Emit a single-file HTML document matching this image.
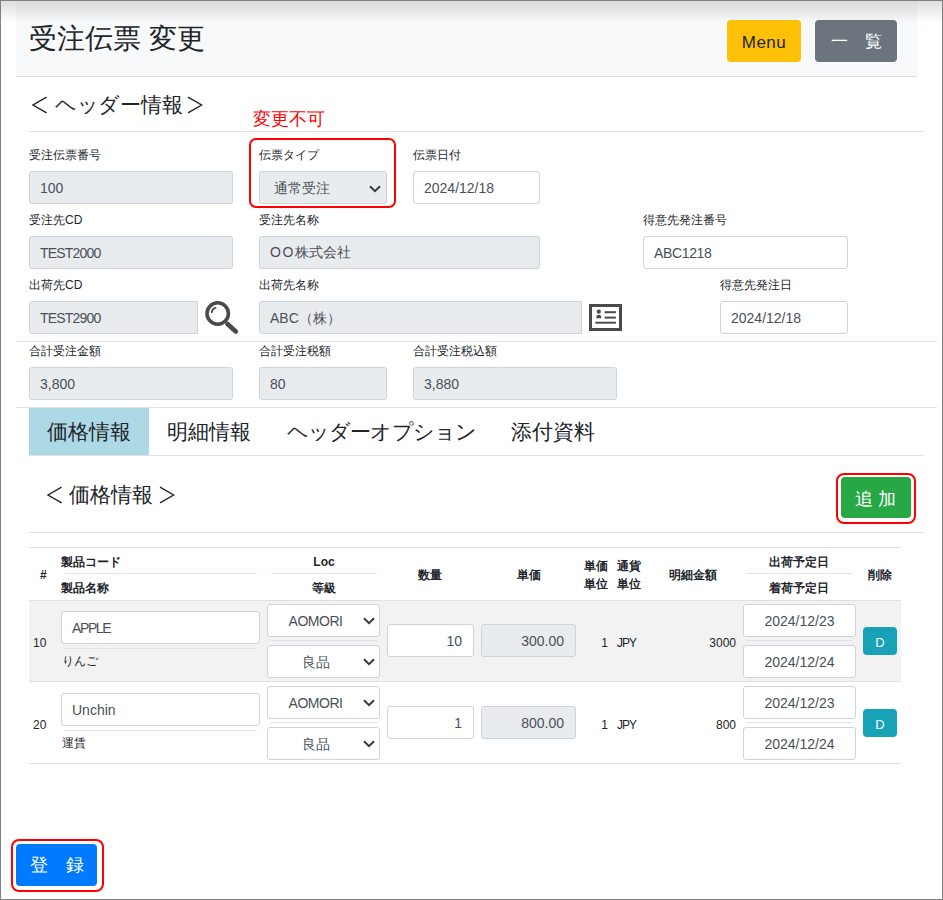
<!DOCTYPE html>
<html lang="ja">
<head>
<meta charset="utf-8">
<title>受注伝票 変更</title>
<style>
*{box-sizing:border-box;margin:0;padding:0}
html,body{width:943px;height:900px;overflow:hidden;background:#fff}
body{position:relative;font-family:"Liberation Sans",sans-serif;color:#212529;font-size:14px}
.a{position:absolute}
.frame{left:0;top:0;width:943px;height:900px;border:1px solid #808080;z-index:50}
.shade{left:1px;top:1px;width:941px;height:22px;background:linear-gradient(to bottom,rgba(0,0,0,.13),rgba(0,0,0,0));z-index:40}
.hdr{left:16px;top:1px;width:901px;height:76px;background:#f8f9fa;border-bottom:1px solid #dee2e6}
.title{left:29px;top:21px;font-size:28px;line-height:36px;white-space:nowrap}
.btn{text-align:center;border-radius:4px;white-space:nowrap}
.line{height:1px;background:#dee2e6}
.lbl{font-size:12px;line-height:16px;white-space:nowrap}
.inp{height:33px;border:1px solid #ced4da;border-radius:3px;background:#fff;color:#495057;font-size:14px;line-height:33px;padding-left:10px;white-space:nowrap;overflow:hidden}
.dis{background:#e9ecef}
.chev{position:absolute}
.red{border:2px solid #f00;border-radius:7px}
.tab{top:408px;height:47px;font-size:21px;line-height:47px;white-space:nowrap;padding:0 18px;color:#212529}
.th{font-size:12px;font-weight:bold;line-height:14px;white-space:nowrap}
.td{font-size:12px;line-height:14px;white-space:nowrap}
.c{text-align:center}
.r{text-align:right}
.ti{line-height:33px}
</style>
</head>
<body>
<div class="a frame"></div>
<div class="a shade"></div>
<div class="a hdr"></div>
<div class="a title">受注伝票 変更</div>
<div class="a btn" style="left:727px;top:20px;width:74px;height:42px;background:#ffc107;font-size:17px;line-height:45px;letter-spacing:0.5px;color:#212529">Menu</div>
<div class="a btn" style="left:815px;top:20px;width:82px;height:42px;background:#6c757d;font-size:17px;line-height:44px;color:#fff">一　覧</div>
<svg class="a" style="left:32px;top:96px" width="16" height="18" viewBox="0 0 16 18"><polyline points="14.6,1.2 1,9 14.6,16.8" fill="none" stroke="#212529" stroke-width="1.4"/></svg>
<div class="a" style="left:55px;top:91px;font-size:21px;line-height:28px;letter-spacing:-0.3px;white-space:nowrap">ヘッダー情報</div>
<svg class="a" style="left:187px;top:96px" width="16" height="18" viewBox="0 0 16 18"><polyline points="1,1.2 14.6,9 1,16.8" fill="none" stroke="#212529" stroke-width="1.4"/></svg>
<div class="a" style="left:253px;top:108px;font-size:17.5px;line-height:22px;color:#f00;white-space:nowrap">変更不可</div>
<div class="a line" style="left:29px;top:131px;width:895px"></div>
<div class="a red" style="left:249px;top:138px;width:147px;height:70px"></div>
<div class="a lbl" style="left:29px;top:147px">受注伝票番号</div>
<div class="a inp dis" style="left:29px;top:171px;width:204px;">100</div>
<div class="a lbl" style="left:259px;top:147px">伝票タイプ</div>
<div class="a inp dis" style="left:259px;top:171px;width:128px;padding-left:14px">通常受注<svg class="chev" style="top:12.6px;right:5px" width="12" height="8" viewBox="0 0 12 8"><polyline points="1,1.2 6,6.2 11,1.2" fill="none" stroke="#343a40" stroke-width="2"/></svg></div>
<div class="a lbl" style="left:413px;top:147px">伝票日付</div>
<div class="a inp" style="left:413px;top:171px;width:127px;">2024/12/18</div>
<div class="a lbl" style="left:29px;top:212px">受注先CD</div>
<div class="a inp dis" style="left:29px;top:236px;width:204px;"><span style="letter-spacing:-0.8px">TEST2000</span></div>
<div class="a lbl" style="left:259px;top:212px">受注先名称</div>
<div class="a inp dis" style="left:259px;top:236px;width:281px;line-height:31px"><span style="letter-spacing:1.6px">OO</span>株式会社</div>
<div class="a lbl" style="left:643px;top:212px">得意先発注番号</div>
<div class="a inp" style="left:643px;top:236px;width:205px;"><span style="letter-spacing:-0.35px">ABC1218</span></div>
<div class="a lbl" style="left:29px;top:277px">出荷先CD</div>
<div class="a inp dis" style="left:29px;top:301px;width:169px;border-radius:3px 0 0 3px"><span style="letter-spacing:-0.8px">TEST2900</span></div>
<svg class="a" style="left:203px;top:299px" width="38" height="36" viewBox="0 0 38 36">
  <circle cx="14.7" cy="14.5" r="10.7" fill="none" stroke="#4a4a4a" stroke-width="3.6"/>
  <path d="M8.6 14 A6 6 0 0 1 13.2 8.7" fill="none" stroke="#4a4a4a" stroke-width="1.8"/>
  <line x1="24.5" y1="25" x2="32.8" y2="32.5" stroke="#4a4a4a" stroke-width="4.6" stroke-linecap="round"/>
</svg>
<div class="a lbl" style="left:259px;top:277px">出荷先名称</div>
<div class="a inp dis" style="left:259px;top:301px;width:323px;border-radius:3px 0 0 3px">ABC（株）</div>
<svg class="a" style="left:589px;top:304px" width="33" height="27" viewBox="0 0 33 27">
  <rect x="1.5" y="1.5" width="30" height="24" fill="#fff" stroke="#4a4a4a" stroke-width="3"/>
  <circle cx="9.8" cy="7.7" r="2.1" fill="#4a4a4a"/>
  <path d="M7.2 14.3 L7.8 11.4 Q9.8 10.2 11.8 11.4 L12.4 14.3 Z" fill="#4a4a4a"/>
  <line x1="15.6" y1="8.2" x2="26.9" y2="8.2" stroke="#4a4a4a" stroke-width="2"/>
  <line x1="15.6" y1="13.6" x2="26.9" y2="13.6" stroke="#4a4a4a" stroke-width="2"/>
  <line x1="6.3" y1="18.7" x2="26.9" y2="18.7" stroke="#4a4a4a" stroke-width="2"/>
</svg>
<div class="a lbl" style="left:720px;top:277px">得意先発注日</div>
<div class="a inp" style="left:720px;top:301px;width:128px;">2024/12/18</div>
<div class="a line" style="left:16px;top:341px;width:921px"></div>
<div class="a lbl" style="left:29px;top:343px">合計受注金額</div>
<div class="a inp dis" style="left:29px;top:367px;width:204px;">3,800</div>
<div class="a lbl" style="left:259px;top:343px">合計受注税額</div>
<div class="a inp dis" style="left:259px;top:367px;width:128px;">80</div>
<div class="a lbl" style="left:413px;top:343px">合計受注税込額</div>
<div class="a inp dis" style="left:413px;top:367px;width:204px;">3,880</div>
<div class="a line" style="left:16px;top:407px;width:921px"></div>
<div class="a" style="left:29px;top:408px;width:120px;height:47px;background:#add8e6"></div>
<div class="a tab" style="left:29px">価格情報</div>
<div class="a tab" style="left:149px">明細情報</div>
<div class="a tab" style="left:269px;letter-spacing:-0.9px">ヘッダーオプション</div>
<div class="a tab" style="left:493px">添付資料</div>
<div class="a line" style="left:29px;top:455px;width:895px"></div>
<svg class="a" style="left:47px;top:486px" width="16" height="18" viewBox="0 0 16 18"><polyline points="14.6,1.2 1,9 14.6,16.8" fill="none" stroke="#212529" stroke-width="1.4"/></svg>
<div class="a" style="left:69px;top:481px;font-size:21px;line-height:28px;white-space:nowrap">価格情報</div>
<svg class="a" style="left:159px;top:486px" width="16" height="18" viewBox="0 0 16 18"><polyline points="1,1.2 14.6,9 1,16.8" fill="none" stroke="#212529" stroke-width="1.4"/></svg>
<div class="a red" style="left:836px;top:473px;width:80px;height:51px;border-radius:8px"></div>
<div class="a btn" style="left:841px;top:477px;width:70px;height:41px;background:#28a745;color:#fff;font-size:18px;line-height:44px">追 加</div>
<div class="a line" style="left:29px;top:532px;width:895px"></div>
<div class="a line" style="left:29px;top:547px;width:872px"></div>
<div class="a th" style="left:40px;top:568px">#</div>
<div class="a th" style="left:61px;top:555px">製品コード</div>
<div class="a line" style="left:64px;top:573px;width:193px"></div>
<div class="a th" style="left:61px;top:581px">製品名称</div>
<div class="a th c" style="left:271px;top:555px;width:106px">Loc</div>
<div class="a line" style="left:271px;top:573px;width:106px"></div>
<div class="a th c" style="left:271px;top:581px;width:106px">等級</div>
<div class="a th c" style="left:387px;top:568px;width:86px">数量</div>
<div class="a th c" style="left:481px;top:568px;width:95px">単価</div>
<div class="a th" style="left:584px;top:559px">単価</div>
<div class="a th" style="left:584px;top:577px">単位</div>
<div class="a th" style="left:617px;top:559px">通貨</div>
<div class="a th" style="left:617px;top:577px">単位</div>
<div class="a th c" style="left:653px;top:568px;width:80px">明細金額</div>
<div class="a th c" style="left:746px;top:555px;width:106px">出荷予定日</div>
<div class="a line" style="left:746px;top:573px;width:106px"></div>
<div class="a th c" style="left:746px;top:581px;width:106px">着荷予定日</div>
<div class="a th c" style="left:860px;top:568px;width:40px">削除</div>
<div class="a line" style="left:29px;top:600px;width:872px"></div>
<div class="a" style="left:29px;top:601px;width:872px;height:80px;background:#f2f2f2"></div>
<div class="a line" style="left:29px;top:681px;width:872px"></div>
<div class="a td" style="left:33px;top:636px">10</div>
<div class="a inp ti" style="left:61px;top:611px;width:199px"><span style="letter-spacing:-1.4px">APPLE</span></div>
<div class="a line" style="left:64px;top:648px;width:193px"></div>
<div class="a td" style="left:62px;top:654px">りんご</div>
<div class="a inp ti c" style="left:267px;top:604px;width:113px;padding:0 16px 0 0"><span style="letter-spacing:-0.5px">AOMORI</span><svg class="chev" style="top:12px;right:4px" width="12" height="8" viewBox="0 0 12 8"><polyline points="1,1.2 6,6.2 11,1.2" fill="none" stroke="#343a40" stroke-width="2"/></svg></div>
<div class="a line" style="left:271px;top:640px;width:106px"></div>
<div class="a inp ti c" style="left:267px;top:645px;width:113px;padding:0 16px 0 0">良品<svg class="chev" style="top:12px;right:4px" width="12" height="8" viewBox="0 0 12 8"><polyline points="1,1.2 6,6.2 11,1.2" fill="none" stroke="#343a40" stroke-width="2"/></svg></div>
<div class="a inp ti r" style="left:387px;top:624px;width:87px;padding:0 11px 0 0">10</div>
<div class="a inp ti dis r" style="left:481px;top:624px;width:95px;padding:0 11px 0 0">300.00</div>
<div class="a td r" style="left:590px;top:636px;width:18px">1</div>
<div class="a td" style="left:617px;top:636px;letter-spacing:-1px">JPY</div>
<div class="a td r" style="left:680px;top:636px;width:56px">3000</div>
<div class="a inp ti c" style="left:743px;top:604px;width:113px;padding:0">2024/12/23</div>
<div class="a line" style="left:746px;top:640px;width:106px"></div>
<div class="a inp ti c" style="left:743px;top:645px;width:113px;padding:0">2024/12/24</div>
<div class="a btn" style="left:863px;top:627px;width:34px;height:28px;background:#17a2b8;color:#fff;font-size:13px;line-height:31px">D</div>
<div class="a" style="left:29px;top:682px;width:872px;height:81px;background:#fff"></div>
<div class="a line" style="left:29px;top:763px;width:872px"></div>
<div class="a td" style="left:33px;top:718px">20</div>
<div class="a inp ti" style="left:61px;top:693px;width:199px">Unchin</div>
<div class="a line" style="left:64px;top:730px;width:193px"></div>
<div class="a td" style="left:62px;top:736px">運賃</div>
<div class="a inp ti c" style="left:267px;top:686px;width:113px;padding:0 16px 0 0"><span style="letter-spacing:-0.5px">AOMORI</span><svg class="chev" style="top:12px;right:4px" width="12" height="8" viewBox="0 0 12 8"><polyline points="1,1.2 6,6.2 11,1.2" fill="none" stroke="#343a40" stroke-width="2"/></svg></div>
<div class="a line" style="left:271px;top:722px;width:106px"></div>
<div class="a inp ti c" style="left:267px;top:727px;width:113px;padding:0 16px 0 0">良品<svg class="chev" style="top:12px;right:4px" width="12" height="8" viewBox="0 0 12 8"><polyline points="1,1.2 6,6.2 11,1.2" fill="none" stroke="#343a40" stroke-width="2"/></svg></div>
<div class="a inp ti r" style="left:387px;top:706px;width:87px;padding:0 11px 0 0">1</div>
<div class="a inp ti dis r" style="left:481px;top:706px;width:95px;padding:0 11px 0 0">800.00</div>
<div class="a td r" style="left:590px;top:718px;width:18px">1</div>
<div class="a td" style="left:617px;top:718px;letter-spacing:-1px">JPY</div>
<div class="a td r" style="left:680px;top:718px;width:56px">800</div>
<div class="a inp ti c" style="left:743px;top:686px;width:113px;padding:0">2024/12/23</div>
<div class="a line" style="left:746px;top:722px;width:106px"></div>
<div class="a inp ti c" style="left:743px;top:727px;width:113px;padding:0">2024/12/24</div>
<div class="a btn" style="left:863px;top:709px;width:34px;height:28px;background:#17a2b8;color:#fff;font-size:13px;line-height:31px">D</div>
<div class="a red" style="left:11px;top:839px;width:93px;height:53px;border-radius:8px"></div>
<div class="a btn" style="left:16px;top:844px;width:81px;height:42px;background:#007bff;color:#fff;font-size:18px;line-height:42px">登　録</div>
</body>
</html>
